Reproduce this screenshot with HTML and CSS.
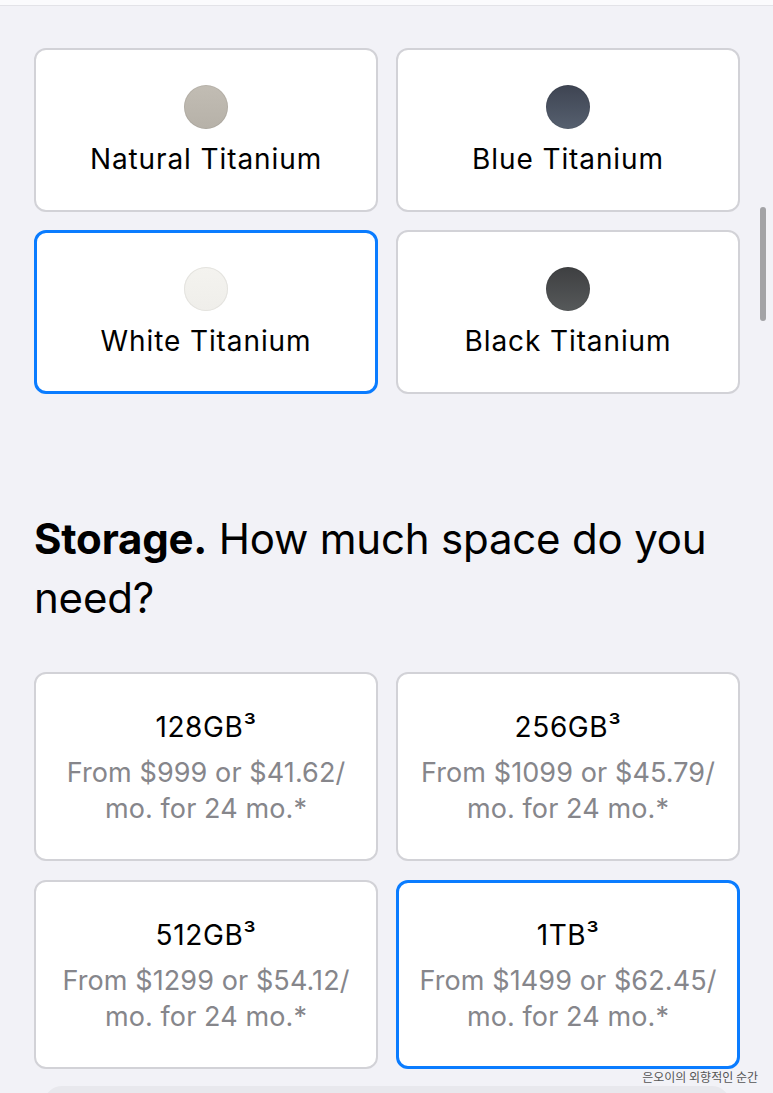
FILE: index.html
```html
<!DOCTYPE html>
<html>
<head>
  <meta charset="utf-8">
  <link rel="stylesheet" href="styles.css">
</head>
<body>
  <div class="topbar"></div>

  <div class="page">
    <div class="options colors">
      <div class="option">
        <span class="swatch natural"></span>
        <div class="option-name">Natural Titanium</div>
      </div>
      <div class="option">
        <span class="swatch blue"></span>
        <div class="option-name">Blue Titanium</div>
      </div>
      <div class="option selected">
        <span class="swatch white"></span>
        <div class="option-name">White Titanium</div>
      </div>
      <div class="option">
        <span class="swatch black"></span>
        <div class="option-name">Black Titanium</div>
      </div>
    </div>

    <h2 class="section-title"><b>Storage.</b> How much space do you need?</h2>

    <div class="options storage">
      <div class="option">
        <div class="option-name">128GB³</div>
        <div class="price">From $999 or $41.62/<br>mo. for 24 mo.*</div>
      </div>
      <div class="option">
        <div class="option-name">256GB³</div>
        <div class="price">From $1099 or $45.79/<br>mo. for 24 mo.*</div>
      </div>
      <div class="option">
        <div class="option-name">512GB³</div>
        <div class="price">From $1299 or $54.12/<br>mo. for 24 mo.*</div>
      </div>
      <div class="option selected">
        <div class="option-name">1TB³</div>
        <div class="price">From $1499 or $62.45/<br>mo. for 24 mo.*</div>
      </div>
    </div>

    <div class="next-panel"></div>
  </div>

  <div class="scrollbar"></div>
  <div class="watermark">은오이의 외향적인 순간</div>
</body>
</html>
```

FILE: styles.css
```css
body {
  margin: 0;
  padding: 0;
  height: 1093px;
  overflow: hidden;
  position: relative;
  font-family: Inter, "Noto Sans", sans-serif;
  background: #f2f2f7;
  color: #1d1d1f;
}

.topbar {
  height: 5px;
  background: #fbfbfd;
  border-bottom: 1px solid #e3e3e8;
}

.page {
  padding: 42px 33px 0 34px;
}

.options {
  display: grid;
  grid-template-columns: 1fr 1fr;
  gap: 18px;
}

.option {
  background: white;
  border: 2px solid #d2d2d7;
  border-radius: 12px;
  display: flex;
  flex-direction: column;
  align-items: center;
  box-sizing: border-box;
}

.option.selected {
  border: 3px solid #0a7cff;
}

.colors .option {
  height: 164px;
  padding-top: 35px;
}

.colors .option.selected {
  padding-top: 34px;
}

.swatch {
  width: 44px;
  height: 44px;
  border-radius: 50%;
  display: block;
  box-shadow: inset 0 0 0 1px rgba(0, 0, 0, 0.06);
}

.swatch.natural { background: linear-gradient(180deg, #c2bdb4, #b6b1a8); }
.swatch.blue { background: linear-gradient(180deg, #3e4452, #56606f); }
.swatch.white { background: linear-gradient(180deg, #f4f3ef, #efeeea); box-shadow: inset 0 0 0 1px #e4e3df; }
.swatch.black { background: linear-gradient(180deg, #3e3f41, #56595a); }

.colors .option-name {
  margin-top: 12px;
  font-size: 28px;
  line-height: 36px;
  letter-spacing: 0.9px;
  color: #000;
}

.section-title {
  margin: 115px 0 45px;
  font-size: 42px;
  line-height: 59px;
  font-weight: 400;
  color: #000;
  letter-spacing: -0.2px;
}

.section-title b {
  font-weight: 700;
}

.storage {
  gap: 19px 18px;
}

.storage .option {
  height: 189px;
  padding-top: 35px;
}

.storage .option.selected {
  padding-top: 34px;
}

.storage .option-name {
  font-size: 28px;
  line-height: 36px;
  letter-spacing: 0.6px;
  color: #000;
}

.price {
  margin-top: 10px;
  font-size: 27px;
  line-height: 36px;
  letter-spacing: 0.1px;
  color: #86868b;
  text-align: center;
}

.next-panel {
  margin: 17px 10px 0;
  height: 40px;
  background: #e8e8ed;
  border-radius: 18px 18px 0 0;
}

.scrollbar {
  position: absolute;
  left: 760px;
  top: 207px;
  width: 6px;
  height: 114px;
  border-radius: 3px;
  background: #a3a3a6;
}

.watermark {
  position: absolute;
  right: 15px;
  top: 1068px;
  font-family: "Noto Sans CJK KR", sans-serif;
  font-size: 12px;
  color: #555;
}
```
